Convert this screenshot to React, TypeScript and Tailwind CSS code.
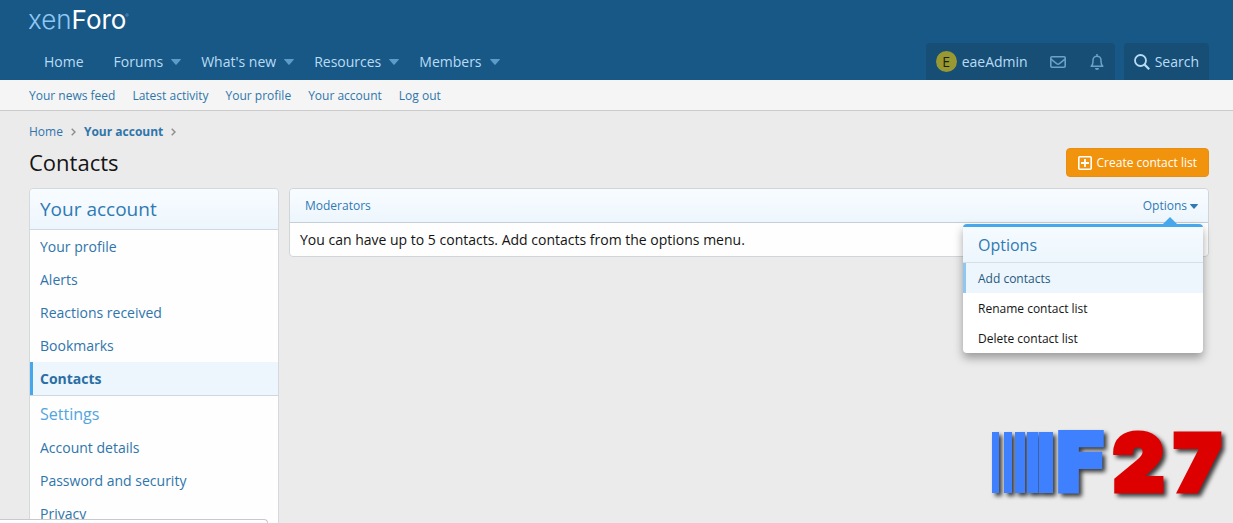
import React from "react";

const navItems = [
  { label: "Home", menu: false },
  { label: "Forums", menu: true },
  { label: "What's new", menu: true },
  { label: "Resources", menu: true },
  { label: "Members", menu: true },
];

const subNavItems = [
  "Your news feed",
  "Latest activity",
  "Your profile",
  "Your account",
  "Log out",
];

const accountLinks = [
  "Your profile",
  "Alerts",
  "Reactions received",
  "Bookmarks",
  "Contacts",
];

const settingsLinks = ["Account details", "Password and security", "Privacy"];

const Caret = ({ className }: { className: string }) => (
  <svg viewBox="0 0 10 6" className={className} aria-hidden="true">
    <path d="M0.6 0h8.8q.9 0 .3.8L5.6 5.5q-.6.6-1.2 0L.3.8Q-.3 0 .6 0z" fill="currentColor" />
  </svg>
);

const Chevron = () => (
  <svg viewBox="0 0 5 8" className="h-2 w-[5px] text-[#8d8d8d]" aria-hidden="true">
    <path d="M.7.7 4 4 .7 7.3" fill="none" stroke="currentColor" strokeWidth="1.4" />
  </svg>
);

const Logo = () => (
  <a href="#" aria-label="xenForo" className="block">
    <svg viewBox="0 0 104 34" className="h-[34px] w-[104px]">
      <g fontFamily="Inter, sans-serif" fontSize="26">
        <text x="-1" y="25" fill="#8fc8f5" fontWeight="300">
          xen<tspan fill="#ffffff" fontWeight="400">Foro</tspan>
        </text>
      </g>
      <circle cx="98" cy="11" r="1.2" fill="none" stroke="#6aa5d3" strokeWidth=".6" />
    </svg>
  </a>
);

const Header = () => {
  return (
    <header className="bg-[#185886] pl-[29px] pr-6">
      <div className="h-[43px] pt-1">
        <Logo />
      </div>
      <div className="flex h-[37px] items-stretch justify-between text-sm font-medium text-[#b9dcf5]">
        <nav className="flex">
          {navItems.map((item) => (
            <a key={item.label} href="#" className="flex items-center pl-[15px] pr-[5px]">
              {item.label}
              {item.menu ? (
                <Caret className="ml-2 h-[6px] w-[10px] text-[#5c9cc9]" />
              ) : (
                <span className="w-[10px]" />
              )}
            </a>
          ))}
        </nav>

        <div className="flex gap-[9px]">
          <div className="flex items-center rounded-t-sm bg-[#174e76] pl-[10px] pr-[11px]">
            <a href="#" className="flex items-center gap-[5px]">
              <span className="flex size-[21px] items-center justify-center rounded-full bg-[#999933] text-sm font-normal text-[#1f1f0a]">
                E
              </span>
              eaeAdmin
            </a>
            <a href="#" aria-label="Conversations" className="ml-[22px]">
              <svg viewBox="0 0 16 12" className="h-3 w-4 text-[#6ba2c8]">
                <rect x=".8" y=".8" width="14.4" height="10.4" rx="1.2" fill="none" stroke="currentColor" strokeWidth="1.6" />
                <path d="M1 3.2 6.6 7.7q1.4 1 2.8 0L15 3.2" fill="none" stroke="currentColor" strokeWidth="1.5" />
              </svg>
            </a>
            <a href="#" aria-label="Alerts" className="ml-6">
              <svg viewBox="0 0 14 16" className="h-4 w-[14px] text-[#6ba2c8]">
                <path d="M7 0v2M1.2 12.3h11.6Q11 10.5 11 7.4V6.2A4 4 0 0 0 3 6.2V7.4Q3 10.5 1.2 12.3z" fill="none" stroke="currentColor" strokeWidth="1.5" strokeLinejoin="round" />
                <path d="M5 14h4a2 2 0 0 1-4 0z" fill="currentColor" />
              </svg>
            </a>
          </div>
          <a href="#" className="flex items-center gap-[5px] rounded-t-sm bg-[#174e76] px-[10px]">
            <svg viewBox="0 0 16 16" className="size-4" aria-hidden="true">
              <circle cx="6.5" cy="6.5" r="5.5" fill="none" stroke="currentColor" strokeWidth="1.8" />
              <path d="m10.6 10.6 4.6 4.6" stroke="currentColor" strokeWidth="2.2" />
            </svg>
            Search
          </a>
        </div>
      </div>
    </header>
  );
};

const Sidebar = () => {
  return (
    <aside className="w-[250px] shrink-0 rounded border border-[#d4d9de] bg-[#fefefe] text-sm text-[#2f75ab]">
      <h2 className="flex h-[41px] items-center rounded-t border-b border-[#cfd8e2] bg-gradient-to-b from-[#f8fcff] to-[#edf6fd] px-[10px] pt-[2px] text-[19px] text-[#2f7ab3]">
        Your account
      </h2>
      <ul>
        {accountLinks.map((label) => (
          <li key={label}>
            <a
              href="#"
              className={
                label === "Contacts"
                  ? "flex h-[33px] items-center border-l-[3px] border-[#47a7eb] bg-[#edf5fd] pl-[7px] font-bold text-[#2a6fa3]"
                  : "flex h-[33px] items-center px-[10px]"
              }
            >
              {label}
            </a>
          </li>
        ))}
      </ul>
      <h3 className="flex h-9 items-center border-t border-[#cfd8e2] px-[10px] text-base text-[#52a5e0]">
        Settings
      </h3>
      <ul>
        {settingsLinks.map((label) => (
          <li key={label}>
            <a href="#" className="flex h-[33px] items-center px-[10px]">
              {label}
            </a>
          </li>
        ))}
      </ul>
    </aside>
  );
};

const OptionsMenu = () => {
  return (
    <div className="absolute right-[5px] top-[35px] z-10 w-60 rounded border-t-[3px] border-[#47a7eb] bg-white text-xs text-[#141414] shadow-[0_5px_10px_rgba(0,0,0,0.35)]">
      <svg viewBox="0 0 16 8" className="absolute -top-[10px] right-[25px] h-2 w-4 text-[#47a7eb]" aria-hidden="true">
        <path d="M8 0l8 8H0z" fill="currentColor" />
      </svg>
      <h4 className="flex h-9 items-center border-b border-[#d3dfe9] bg-gradient-to-b from-[#f5fbff] to-[#edf6fd] px-[15px] text-base text-[#2f7ab3]">
        Options
      </h4>
      <a href="#" className="flex h-[30px] items-center border-l-[3px] border-[#8fc7f0] bg-[#edf5fd] pl-3 pt-[2px] text-[#245a80]">
        Add contacts
      </a>
      <a href="#" className="flex h-[30px] items-center px-[15px] pt-[2px]">
        Rename contact list
      </a>
      <a href="#" className="flex h-[30px] items-center px-[15px] pt-[2px]">
        Delete contact list
      </a>
    </div>
  );
};

const ContactList = () => {
  return (
    <section className="relative rounded border border-[#d0d5da] bg-[#fefefe]">
      <div className="flex h-[34px] items-center justify-between rounded-t border-b border-[#c5ced8] bg-gradient-to-b from-[#f8fcff] to-[#edf6fd] pl-[15px] pr-[10px] pt-px text-xs text-[#2f7ab3]">
        <a href="#">Moderators</a>
        <button type="button" className="flex items-center gap-[3px]">
          Options
          <Caret className="h-[5px] w-2" />
        </button>
      </div>
      <p className="px-[10px] py-[6px] text-sm leading-[21px] text-[#141414]">
        You can have up to 5 contacts. Add contacts from the options menu.
      </p>
      <OptionsMenu />
    </section>
  );
};

// Barcode bars running into the F, then the red number
const Watermark = () => (
  <svg
    viewBox="0 0 245 120"
    role="img"
    aria-label="F27"
    className="absolute bottom-0 right-0 h-[120px] w-[245px] [filter:drop-shadow(3px_3px_2px_rgba(0,0,0,0.75))]"
  >
    <g fill="#3f80ff">
      <rect x="4" y="29" width="7" height="61" />
      <rect x="16" y="29" width="8" height="61" />
      <rect x="27" y="29" width="10" height="61" />
      <rect x="39" y="29" width="11.5" height="61" />
      <rect x="51" y="29" width="14" height="61" />
    </g>
    <g fontWeight="900">
      <text x="66" y="87" fontFamily="DejaVu Sans, sans-serif" fontSize="78" fill="#3f80ff" stroke="#3f80ff" strokeWidth="6">
        F
      </text>
      <text y="88" fontFamily="Inter, sans-serif" fontSize="79" fill="#dc0000" stroke="#dc0000" strokeWidth="5">
        <tspan x="125">2</tspan>
        <tspan x="186">7</tspan>
      </text>
    </g>
  </svg>
);

const App = () => {
  return (
    <div className="relative h-screen overflow-hidden bg-[#ebebeb] font-['Open_Sans','Noto_Sans',sans-serif]">
      <Header />

      {/* Sub navigation */}
      <nav className="flex h-[31px] items-center gap-[17px] border-b border-[#cbcbcb] bg-[#f5f5f5] px-[29px] pt-[2px] text-xs text-[#2f75ab]">
        {subNavItems.map((label) => (
          <a key={label} href="#">
            {label}
          </a>
        ))}
      </nav>

      <main className="pl-[29px] pr-6 pt-[11px]">
        <div className="flex items-center gap-2 text-xs leading-5 text-[#2f75ab]">
          <a href="#">Home</a>
          <Chevron />
          <a href="#" className="font-bold">
            Your account
          </a>
          <Chevron />
        </div>

        <div className="mb-[11px] mt-[6px] flex h-[29px] items-center justify-between">
          <h1 className="text-[22px] text-[#141414]">Contacts</h1>
          <button
            type="button"
            className="flex h-[29px] items-center gap-[5px] rounded border border-[#e88f12] bg-[#f2930d] px-[11px] text-xs text-white"
          >
            <svg viewBox="0 0 14 14" className="size-[14px]" aria-hidden="true">
              <rect x=".8" y=".8" width="12.4" height="12.4" rx="1" fill="none" stroke="currentColor" strokeWidth="1.6" />
              <path d="M7 3v8M3 7h8" stroke="currentColor" strokeWidth="1.8" />
            </svg>
            Create contact list
          </button>
        </div>

        <div className="flex items-start gap-[10px]">
          <Sidebar />
          <div className="min-w-0 flex-1">
            <ContactList />
          </div>
        </div>
      </main>

      <Watermark />

      {/* Link status bubble */}
      <div className="absolute bottom-0 left-0 h-1 w-[268px] rounded-tr border-r border-t border-[#c9c9c9] bg-white" />
    </div>
  );
};

export default App;
